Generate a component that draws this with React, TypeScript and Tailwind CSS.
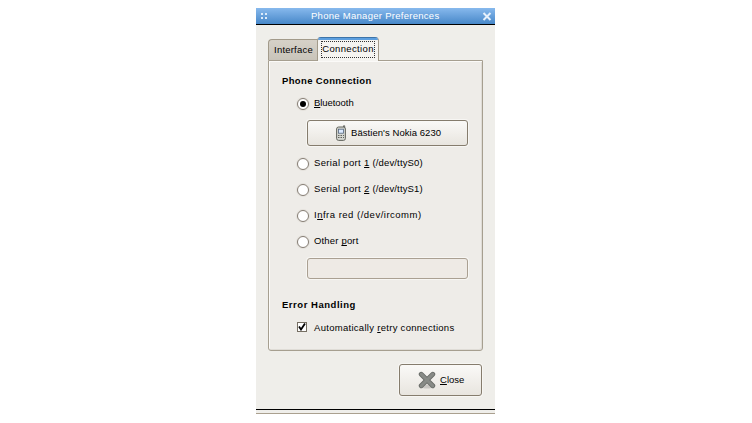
import type { ReactNode } from "react";

const key = "underline decoration-1 underline-offset-[1px] [text-decoration-skip-ink:none]";

function Radio({ checked = false, children }: { checked?: boolean; children: ReactNode }) {
  return (
    <label className="flex h-[13px] items-center">
      <span className="mt-px flex size-[12px] shrink-0 items-center justify-center rounded-full border border-[#857d73] bg-white shadow-[0_0_0_1px_#e4e1dc]">
        {checked && <span className="size-[6px] rounded-full bg-black" />}
      </span>
      <span className="-mt-[3px] ml-[5px] leading-[13px]">{children}</span>
    </label>
  );
}

function SerialLabel({ index, device }: { index: number; device: string }) {
  return (
    <>
      <span className="tracking-[0.34px]">Serial port </span>
      <span className={key}>{index}</span>
      <span className="tracking-[0.14px] [word-spacing:0.4px]"> ({device})</span>
    </>
  );
}

function PhoneIcon() {
  return (
    <svg width="10" height="16" viewBox="0 0 10 16" className="shrink-0">
      <path d="M7.5 3V.8h1.2V4" fill="#aaa" stroke="#55574f" strokeWidth=".8" />
      <rect x=".6" y="2" width="8.8" height="13.4" rx="2" fill="#d5d7d1" stroke="#62645d" />
      <rect x="2.5" y="4.2" width="5" height="4" fill="#dceaff" stroke="#53647c" strokeWidth=".8" />
      <path d="M2 10.5h1.5m1 0h1.5m1 0h1M2 12.5h1.5m1 0h1.5m1 0h1" stroke="#62645d" />
    </svg>
  );
}

function CloseIcon() {
  return (
    <svg width="18" height="18" viewBox="0 0 18 18" className="shrink-0">
      <ellipse cx="9" cy="15.5" rx="6" ry="2" fill="#c9c7c3" />
      <path d="M3.2 3.2 14.8 14.8M14.8 3.2 3.2 14.8" stroke="#666965" strokeWidth="4.8" strokeLinecap="round" />
      <path d="M3.2 3.2 14.8 14.8M14.8 3.2 3.2 14.8" stroke="#888b87" strokeWidth="3.2" strokeLinecap="round" />
    </svg>
  );
}

export default function App() {
  return (
    <div className="h-[423px] w-[752px] overflow-hidden bg-white pt-2 pl-64 font-['Liberation_Sans',Arial,sans-serif] text-[9.5px] whitespace-nowrap text-black">
      <div className="flex h-[406px] w-[239px] flex-col bg-[#efeeea]">
        <header className="flex h-[17px] shrink-0 items-center border-b border-black bg-linear-to-b from-[#87b9ed] to-[#4788c9] text-white">
          <svg width="9" height="8" viewBox="0 0 9 8" className="ml-[4px]" fill="#dcebfa">
            <path d="M1 1h2v2H1zM5 1h2v2H5zM1 5h2v2H1zM5 5h2v2H5z" />
          </svg>
          <h1 className="-mt-px ml-[42px] w-[160px] leading-[15px] tracking-[0.28px]">Phone Manager Preferences</h1>
          <svg width="10" height="9" viewBox="0 0 10 9" className="ml-[11px]">
            <path d="m1.5 1 7 7m0-7-7 7" stroke="#e6f0fb" strokeWidth="2" />
          </svg>
        </header>

        <main className="flex flex-col px-3 pt-[11px]">
          <div className="flex h-[24px] items-end">
            <div className="flex h-[21px] w-[50px] items-center justify-center rounded-tl-[4px] border border-r-0 border-b-0 border-[#a29a8a] bg-linear-to-b from-[#d6d1c8] to-[#c9c4ba] pt-px tracking-[0.22px]">
              Interface
            </div>
            <div className="z-10 -mb-px -ml-px flex h-[24px] w-[62px] flex-col rounded-t-[4px] border border-b-0 border-[#a29a8a] border-t-[#3d74a9] bg-[#f5f4f1]">
              <div className="h-[2px] shrink-0 rounded-t-[2px] bg-[#5d9fdf]" />
              <div className="mx-[3px] mt-px flex h-[17px] shrink-0 items-center justify-center border border-dotted border-[#333] tracking-[0.35px]">
                Connection
              </div>
            </div>
          </div>

          <section className="h-[291px] w-[215px] rounded-b-[3px] border border-[#a69f90] bg-[#eeece8] pl-[13px] shadow-[inset_1px_1px_0_#fbfaf8,inset_-1px_-1px_0_#dfdcd6]">
            <h2 className="mt-[13px] leading-[13px] font-bold tracking-[0.36px]">Phone Connection</h2>
            <div className="mt-[10px] ml-[15px]">
              <Radio checked><span className="tracking-[-0.06px]"><span className={key}>B</span>luetooth</span></Radio>
            </div>
            <button className="mt-[10px] ml-[25px] flex h-[26px] w-[161px] items-center rounded-[3px] border border-[#857c6d] bg-linear-to-b from-[#faf9f7] to-[#e8e5df] pl-[28px] shadow-[0_0_0_1px_#f7f6f3]">
              <PhoneIcon />
              <span className="ml-[5px] tracking-[0.06px]">Bästien's Nokia 6230</span>
            </button>
            <div className="mt-[11px] ml-[15px] flex flex-col gap-[13px]">
              <Radio><SerialLabel index={1} device="/dev/ttyS0" /></Radio>
              <Radio><SerialLabel index={2} device="/dev/ttyS1" /></Radio>
              <Radio><span className="tracking-[0.5px]">I<span className={key}>n</span>fra red (/dev/ircomm)</span></Radio>
              <Radio><span className="tracking-[0.17px]">Other <span className={key}>p</span>ort</span></Radio>
            </div>
            <input className="mt-[10px] ml-[25px] block h-[21px] w-[161px] rounded-[3px] border border-[#aaa092] bg-[#eeeae5] shadow-[0_0_0_1px_#f7f6f3]" disabled />
            <h2 className="mt-[19px] leading-[13px] font-bold tracking-[0.53px]">Error Handling</h2>
            <label className="mt-[9px] ml-[15px] flex h-[13px] items-center">
              <span className="flex size-[10px] shrink-0 items-center justify-center border border-[#766f63] bg-white">
                <svg width="8" height="8" viewBox="0 0 8 8">
                  <path d="m1 3.5 2 3 4-6" fill="none" stroke="#000" strokeWidth="1.8" />
                </svg>
              </span>
              <span className="mt-px ml-[7px] leading-[13px] tracking-[0.29px]">Automatically <span className={key}>r</span>etry connections</span>
            </label>
          </section>

          <button className="mt-[13px] mr-px flex h-[32px] w-[83px] items-center self-end rounded-[3px] border border-[#857c6d] bg-linear-to-b from-[#faf9f7] to-[#e8e5df] pl-[18px] shadow-[0_0_0_1px_#f7f6f3]">
            <CloseIcon />
            <span className="ml-[4px]"><span className={key}>C</span>lose</span>
          </button>
        </main>
        <footer className="mt-auto h-[5px] border-t border-b border-t-black border-b-[#aaa08f] bg-[#efeeea]" />
      </div>
    </div>
  );
}
